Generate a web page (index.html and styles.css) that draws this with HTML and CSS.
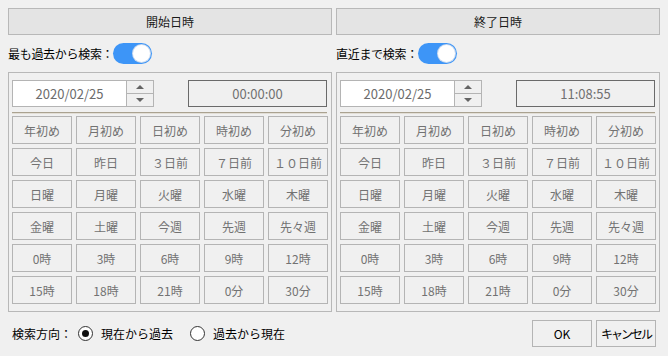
FILE: index.html
```html
<!DOCTYPE html>
<html lang="ja">
<head>
    <meta charset="UTF-8">
    <title>日時指定</title>
    <link rel="stylesheet" href="styles.css">
</head>
<body>
    <div class="dialog">
        <div class="panels">
            <div class="panel">
                <div class="panel-header">開始日時</div>
                <div class="toggle-row">
                    <span class="toggle-label">最も過去から検索：</span>
                    <span class="toggle on"><span class="knob"></span></span>
                </div>
                <div class="panel-box">
                    <div class="date-row">
                        <div class="date-input">
                            <span class="date-text">2020/02/25</span>
                            <span class="spinner">
                                <span class="spin up"></span>
                                <span class="spin down"></span>
                            </span>
                        </div>
                        <div class="time-box">00:00:00</div>
                    </div>
                    <div class="separator"></div>
                    <div class="quick-grid">
                        <button class="quick">年初め</button>
                        <button class="quick">月初め</button>
                        <button class="quick">日初め</button>
                        <button class="quick">時初め</button>
                        <button class="quick">分初め</button>
                        <button class="quick">今日</button>
                        <button class="quick">昨日</button>
                        <button class="quick">３日前</button>
                        <button class="quick">７日前</button>
                        <button class="quick">１０日前</button>
                        <button class="quick">日曜</button>
                        <button class="quick">月曜</button>
                        <button class="quick">火曜</button>
                        <button class="quick">水曜</button>
                        <button class="quick">木曜</button>
                        <button class="quick">金曜</button>
                        <button class="quick">土曜</button>
                        <button class="quick">今週</button>
                        <button class="quick">先週</button>
                        <button class="quick">先々週</button>
                        <button class="quick">0時</button>
                        <button class="quick">3時</button>
                        <button class="quick">6時</button>
                        <button class="quick">9時</button>
                        <button class="quick">12時</button>
                        <button class="quick">15時</button>
                        <button class="quick">18時</button>
                        <button class="quick">21時</button>
                        <button class="quick">0分</button>
                        <button class="quick">30分</button>
                    </div>
                </div>
            </div>

            <div class="panel">
                <div class="panel-header">終了日時</div>
                <div class="toggle-row">
                    <span class="toggle-label">直近まで検索：</span>
                    <span class="toggle on"><span class="knob"></span></span>
                </div>
                <div class="panel-box">
                    <div class="date-row">
                        <div class="date-input">
                            <span class="date-text">2020/02/25</span>
                            <span class="spinner">
                                <span class="spin up"></span>
                                <span class="spin down"></span>
                            </span>
                        </div>
                        <div class="time-box">11:08:55</div>
                    </div>
                    <div class="separator"></div>
                    <div class="quick-grid">
                        <button class="quick">年初め</button>
                        <button class="quick">月初め</button>
                        <button class="quick">日初め</button>
                        <button class="quick">時初め</button>
                        <button class="quick">分初め</button>
                        <button class="quick">今日</button>
                        <button class="quick">昨日</button>
                        <button class="quick">３日前</button>
                        <button class="quick">７日前</button>
                        <button class="quick">１０日前</button>
                        <button class="quick">日曜</button>
                        <button class="quick">月曜</button>
                        <button class="quick">火曜</button>
                        <button class="quick">水曜</button>
                        <button class="quick">木曜</button>
                        <button class="quick">金曜</button>
                        <button class="quick">土曜</button>
                        <button class="quick">今週</button>
                        <button class="quick">先週</button>
                        <button class="quick">先々週</button>
                        <button class="quick">0時</button>
                        <button class="quick">3時</button>
                        <button class="quick">6時</button>
                        <button class="quick">9時</button>
                        <button class="quick">12時</button>
                        <button class="quick">15時</button>
                        <button class="quick">18時</button>
                        <button class="quick">21時</button>
                        <button class="quick">0分</button>
                        <button class="quick">30分</button>
                    </div>
                </div>
            </div>
        </div>

        <div class="footer">
            <div class="direction">
                <span class="direction-label">検索方向：</span>
                <span class="radio checked"></span>
                <span class="radio-text">現在から過去</span>
                <span class="radio"></span>
                <span class="radio-text">過去から現在</span>
            </div>
            <div class="actions">
                <button class="action">OK</button>
                <button class="action cancel">キャンセル</button>
            </div>
        </div>
    </div>
</body>
</html>
```

FILE: styles.css
```css
body, html {
    margin: 0;
    padding: 0;
    background-color: #f0f0f0;
    font-family: "Noto Sans CJK JP", "Noto Sans", sans-serif;
    font-size: 12px;
    color: #000;
}

.dialog {
    padding: 8px;
    width: 652px;
}

.panels {
    display: grid;
    grid-template-columns: 324px 324px;
    gap: 4px;
}

.panel-header {
    height: 25px;
    line-height: 25px;
    background-color: #e4e4e4;
    border: 1px solid #b8b8b8;
    text-align: center;
    font-size: 12px;
    color: #1a1a1a;
}

.toggle-row {
    display: flex;
    align-items: center;
    height: 21px;
    margin: 8px 0;
}

.toggle-label {
    line-height: 21px;
    letter-spacing: -0.3px;
}

.toggle {
    width: 39px;
    height: 21px;
    border-radius: 11px;
    background-color: #d0d0d0;
    display: flex;
    align-items: center;
    justify-content: flex-start;
    box-sizing: border-box;
    padding: 0 2px;
}

.toggle.on {
    background-color: #3d95f7;
    justify-content: flex-end;
}

.knob {
    width: 17px;
    height: 17px;
    border-radius: 50%;
    background-color: #fff;
    box-shadow: 0 0 0 1px #c9d9ee;
}

.panel-box {
    border: 1px solid #b8b8b8;
    padding: 7px 3px 7px 3px;
}

.date-row {
    display: flex;
    justify-content: space-between;
    height: 27px;
}

.date-input {
    display: flex;
    width: 142px;
    box-sizing: border-box;
    border: 1px solid #b4b4b4;
    background-color: #fff;
}

.date-text {
    flex: 1;
    text-align: center;
    line-height: 25px;
    font-size: 13px;
    color: #6c6c6c;
}

.spinner {
    width: 26px;
    display: flex;
    flex-direction: column;
    border-left: 1px solid #b4b4b4;
    background-color: #f0f0f0;
}

.spin {
    flex: 1;
    display: flex;
    align-items: center;
    justify-content: center;
}

.spin.up {
    border-bottom: 1px solid #b4b4b4;
}

.spin.up::before {
    content: "";
    border-left: 4px solid transparent;
    border-right: 4px solid transparent;
    border-bottom: 4px solid #646464;
}

.spin.down::before {
    content: "";
    border-left: 4px solid transparent;
    border-right: 4px solid transparent;
    border-top: 4px solid #646464;
}

.time-box {
    width: 139px;
    margin-right: 1px;
    box-sizing: border-box;
    border: 1px solid #6a6a6a;
    text-align: center;
    line-height: 25px;
    font-size: 13px;
    color: #707070;
}

.separator {
    height: 0;
    border-top: 1px solid #aaa290;
    border-bottom: 1px solid #e2ded6;
    margin: 5px 1px 2px 0;
}

.quick-grid {
    display: grid;
    grid-template-columns: repeat(5, 60px);
    grid-auto-rows: 28px;
    gap: 4px;
}

.quick {
    margin: 0;
    padding: 0;
    background-color: #f0f0f0;
    border: 1px solid #b4b4b4;
    font-family: inherit;
    font-size: 12px;
    color: #727272;
}

.footer {
    display: flex;
    justify-content: space-between;
    align-items: center;
    margin-top: 8px;
    padding: 0 4px;
}

.direction {
    display: flex;
    align-items: center;
}

.direction-label {
    margin-right: 6px;
}

.radio {
    width: 15px;
    height: 15px;
    box-sizing: border-box;
    border: 1px solid #333;
    border-radius: 50%;
    background-color: #fff;
    display: flex;
    align-items: center;
    justify-content: center;
    margin-right: 8px;
}

.radio.checked::before {
    content: "";
    width: 7px;
    height: 7px;
    border-radius: 50%;
    background-color: #111;
}

.radio-text {
    margin-right: 17px;
}

.actions {
    display: flex;
    gap: 4px;
}

.action {
    width: 60px;
    height: 27px;
    margin: 0;
    padding: 0;
    background-color: #f0f0f0;
    border: 1px solid #b4b4b4;
    font-family: inherit;
    font-size: 12px;
    color: #000;
}

.action.cancel {
    letter-spacing: -2px;
}
```
